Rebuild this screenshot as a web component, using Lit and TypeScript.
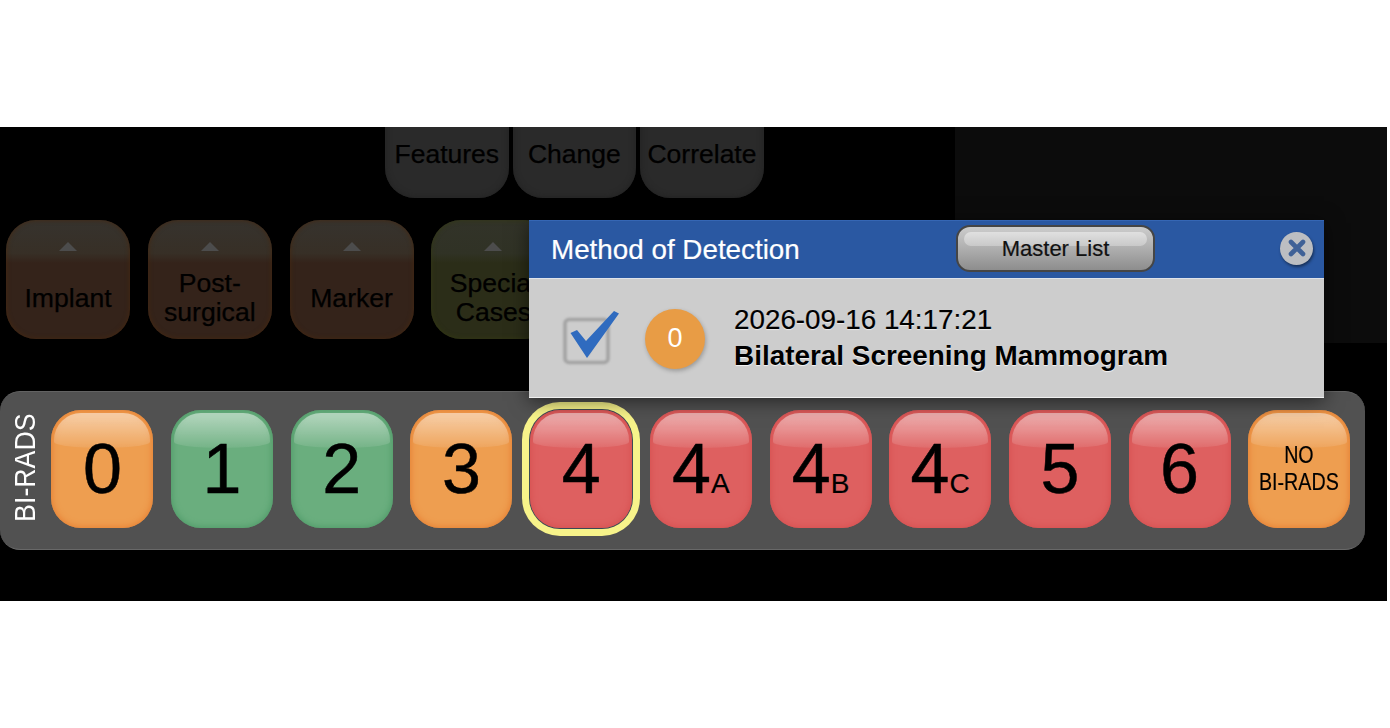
import { LitElement, html, css, svg } from "lit";
import { customElement } from "lit/decorators.js";

type Tone = "orange" | "green" | "red";
interface Grade { main: string; sub?: string; tone: Tone; selected?: boolean; }

const GRADES: Grade[] = [
  { main: "0", tone: "orange" },
  { main: "1", tone: "green" },
  { main: "2", tone: "green" },
  { main: "3", tone: "orange" },
  { main: "4", tone: "red", selected: true },
  { main: "4", sub: "A", tone: "red" },
  { main: "4", sub: "B", tone: "red" },
  { main: "4", sub: "C", tone: "red" },
  { main: "5", tone: "red" },
  { main: "6", tone: "red" },
];

@customElement("app-root")
export class AppRoot extends LitElement {
  static styles = css`
    :host {
      display: block;
      width: 1390px;
      height: 728px;
      background: #fff;
      padding-top: 127px;
      box-sizing: border-box;
      font-family: "Liberation Sans", Arial, sans-serif;
      color: #000;
    }
    .stage {
      position: relative;
      width: 1387px;
      height: 474px;
      background: #000;
      overflow: hidden;
      display: flex;
      flex-direction: column;
    }
    .upper { display: flex; height: 264px; flex: none; }
    .left { width: 955px; flex: none; }
    .side { flex: 1; height: 216px; background: #0c0c0c; }

    .top-row {
      display: flex;
      gap: 4px;
      padding-left: 385px;
      margin-top: -50px;
    }
    .top-btn {
      width: 123.6px;
      height: 120.5px;
      flex: none;
      box-sizing: border-box;
      padding-top: 62px;
      border-radius: 30px;
      background: #2a2a2a;
      box-shadow: inset 0 0 6px #212121;
      text-align: center;
      font-size: 26.5px;
      line-height: 30px;
      -webkit-text-stroke: 0.25px #000;
    }
    .tool-row {
      display: flex;
      gap: 17.8px;
      padding-left: 6px;
      margin-top: 22.5px;
    }
    .tool {
      width: 124px;
      height: 119px;
      flex: none;
      box-sizing: border-box;
      padding-top: 22px;
      border-radius: 30px;
      display: flex;
      flex-direction: column;
      align-items: center;
      font-size: 26.6px;
      line-height: 29px;
      text-align: center;
      -webkit-text-stroke: 0.25px #000;
    }
    .tool.brown {
      background: linear-gradient(#36332e 0, #372f26 28%, #34231a 36%, #34231a 100%);
      box-shadow: inset 0 0 5px #472810;
    }
    .tool.olive {
      background: linear-gradient(#323329 0, #303225 28%, #2b2d18 36%, #2b2d18 100%);
      box-shadow: inset 0 0 5px #333912;
    }
    .arrow {
      width: 0;
      height: 0;
      border-left: 9.5px solid transparent;
      border-right: 9.5px solid transparent;
      border-bottom: 9.5px solid #4c4c4c;
    }
    .tool-label {
      height: 58px;
      margin-top: 18px;
      display: flex;
      align-items: center;
    }

    .bar {
      flex: none;
      width: 1365px;
      height: 159px;
      box-sizing: border-box;
      background: #515151;
      border-top: 1px solid #626262;
      border-bottom: 1px solid #686868;
      border-radius: 20px;
      display: flex;
      padding-top: 18px;
    }
    .bar-label {
      width: 51.4px;
      height: 118px;
      flex: none;
      display: flex;
      align-items: center;
      justify-content: center;
    }
    .bar-label span {
      writing-mode: vertical-rl;
      transform: rotate(180deg) scaleY(0.88);
      color: #fff;
      font-size: 30.4px;
      line-height: 30px;
      white-space: nowrap;
      margin-top: -2px;
      margin-left: -3px;
    }
    .grades {
      display: grid;
      grid-template-columns: repeat(11, 102px);
      column-gap: 17.7px;
    }
    .grade {
      position: relative;
      width: 102px;
      height: 118px;
      box-sizing: border-box;
      border-radius: 30px;
      display: flex;
      align-items: center;
      justify-content: center;
      line-height: 1;
    }
    .grade::before {
      content: "";
      position: absolute;
      left: 3px;
      right: 3px;
      top: 3px;
      height: 35px;
      border-radius: 27px 27px 50% 50% / 27px 27px 6px 6px;
      background: linear-gradient(rgba(255, 255, 255, 0.5), rgba(255, 255, 255, 0.08));
      filter: blur(0.7px);
    }
    .grade.orange { background: #ee9e50; box-shadow: inset 0 0 6px 1px #e67f33; }
    .grade.green { background: #6aae7e; box-shadow: inset 0 0 6px 1px #4f9a68; }
    .grade.red { background: #de6060; box-shadow: inset 0 0 6px 1px #d65050; }
    .grade.selected {
      box-shadow: inset 0 0 6px 1px #d65050, 0 0 0 1px #3a4a55, 0 0 0 8px #f7f38a;
    }
    .text { position: relative; white-space: nowrap; -webkit-text-stroke: 0.5px #000; }
    .num { font-size: 70px; }
    .sub { font-size: 28px; -webkit-text-stroke: 0.2px #000; }
    .none {
      position: relative;
      font-size: 24.6px;
      line-height: 27px;
      text-align: center;
      transform: scaleX(0.8);
      white-space: nowrap;
      margin-top: -2px;
      -webkit-text-stroke: 0.2px #000;
    }

    .modal {
      position: absolute;
      left: 529px;
      top: 93px;
      width: 795px;
      height: 178px;
      display: flex;
      flex-direction: column;
      box-shadow: 0 3px 18px rgba(0, 0, 0, 0.55);
    }
    .head {
      height: 59px;
      flex: none;
      box-sizing: border-box;
      background: #2a58a2;
      border-top: 1px solid #3566b4;
      border-bottom: 1px solid #dfe3ea;
      display: flex;
      align-items: center;
      padding-left: 22px;
    }
    .title {
      width: 405px;
      flex: none;
      color: #fff;
      font-size: 27.8px;
      white-space: nowrap;
      margin-top: 1px;
      -webkit-text-stroke: 0.2px #fff;
    }
    .master {
      position: relative;
      width: 199px;
      height: 47px;
      flex: none;
      box-sizing: border-box;
      margin-top: -2px;
      border: 2px solid #454545;
      border-radius: 14px;
      background: linear-gradient(#cccccc, #b2b2b2 45%, #8d8d8d);
      display: flex;
      align-items: center;
      justify-content: center;
      font-size: 22px;
      color: #111;
    }
    .master::before {
      content: "";
      position: absolute;
      left: 6px;
      right: 6px;
      top: 5px;
      height: 14px;
      border-radius: 8px;
      background: linear-gradient(#e0e0e0, #c9c9c9);
      filter: blur(0.5px);
    }
    .master span { position: relative; -webkit-text-stroke: 0.2px #111; }
    .close {
      width: 33px;
      height: 33px;
      flex: none;
      margin-left: 125px;
      margin-top: -3px;
      border-radius: 50%;
      background: #bcbec2;
      box-shadow: 1px 2px 3px rgba(0, 0, 0, 0.45);
      display: flex;
      align-items: center;
      justify-content: center;
    }
    .body {
      flex: 1;
      background: #cdcdcd;
      border-bottom: 1px solid #f0f0f0;
      display: flex;
      align-items: center;
      padding-left: 31px;
    }
    .check { flex: none; width: 60px; height: 60px; margin-top: -2px; }
    .badge {
      width: 60px;
      height: 60px;
      flex: none;
      margin-left: 25px;
      margin-top: 1px;
      border-radius: 50%;
      background: #e89c45;
      box-shadow: 1px 2px 4px rgba(0, 0, 0, 0.25);
      color: #fff;
      font-size: 27px;
      display: flex;
      align-items: center;
      justify-content: center;
    }
    .info {
      margin-left: 29px;
      font-size: 27.8px;
      line-height: 36px;
      white-space: nowrap;
    }
    .info b {
      display: block;
      font-size: 27.9px;
      font-weight: 700;
      text-shadow: 0 1px 1px rgba(255, 255, 255, 0.8);
    }
    .info div { text-shadow: 0 1px 1px rgba(255, 255, 255, 0.6); -webkit-text-stroke: 0.2px #000; }
  `;

  private tool(label: unknown, tone: string) {
    return html`<div class="tool ${tone}">
      <div class="arrow"></div>
      <div class="tool-label"><div>${label}</div></div>
    </div>`;
  }

  private checkIcon() {
    return html`<svg class="check" viewBox="0 0 60 60" width="60" height="60">
      <defs>
        <filter id="soft" x="-20%" y="-20%" width="140%" height="140%">
          <feGaussianBlur stdDeviation="1"></feGaussianBlur>
        </filter>
      </defs>
      ${svg`<rect x="5" y="12.5" width="43" height="43" rx="4" fill="none" stroke="#a3a3a3" stroke-width="3.6" filter="url(#soft)"></rect>`}
      ${svg`<path d="M50 12 L30 32 L27 51 Z" fill="#8a8a8a" opacity="0.35" filter="url(#soft)"></path>`}
      ${svg`<path d="M10.5 26 L17 23 L26 34 L54 4 L59 6.5 L27 51 Z" fill="#2f6bbf"></path>`}
    </svg>`;
  }

  render() {
    return html`<div class="stage">
      <div class="upper">
        <div class="left">
          <div class="top-row">
            <div class="top-btn">Features</div>
            <div class="top-btn">Change</div>
            <div class="top-btn">Correlate</div>
          </div>
          <div class="tool-row">
            ${this.tool("Implant", "brown")}
            ${this.tool(html`Post-<br />surgical`, "brown")}
            ${this.tool("Marker", "brown")}
            ${this.tool(html`Special<br />Cases`, "olive")}
          </div>
        </div>
        <div class="side"></div>
      </div>

      <div class="bar">
        <div class="bar-label"><span>BI-RADS</span></div>
        <div class="grades">
          ${GRADES.map(
            (g) => html`<div class="grade ${g.tone} ${g.selected ? "selected" : ""}">
              <div class="text"><span class="num">${g.main}</span>${g.sub ? html`<span class="sub">${g.sub}</span>` : ""}</div>
            </div>`
          )}
          <div class="grade orange">
            <div class="none">NO<br />BI-RADS</div>
          </div>
        </div>
      </div>

      <div class="modal">
        <div class="head">
          <div class="title">Method of Detection</div>
          <div class="master"><span>Master List</span></div>
          <div class="close">
            <svg viewBox="0 0 20 20" width="20" height="20">
              <path d="M4 4 L16 16 M16 4 L4 16" stroke="#3f6197" stroke-width="4.6" stroke-linecap="round" fill="none"></path>
            </svg>
          </div>
        </div>
        <div class="body">
          ${this.checkIcon()}
          <div class="badge">0</div>
          <div class="info">
            <div>2026-09-16 14:17:21</div>
            <b>Bilateral Screening Mammogram</b>
          </div>
        </div>
      </div>
    </div>`;
  }
}
